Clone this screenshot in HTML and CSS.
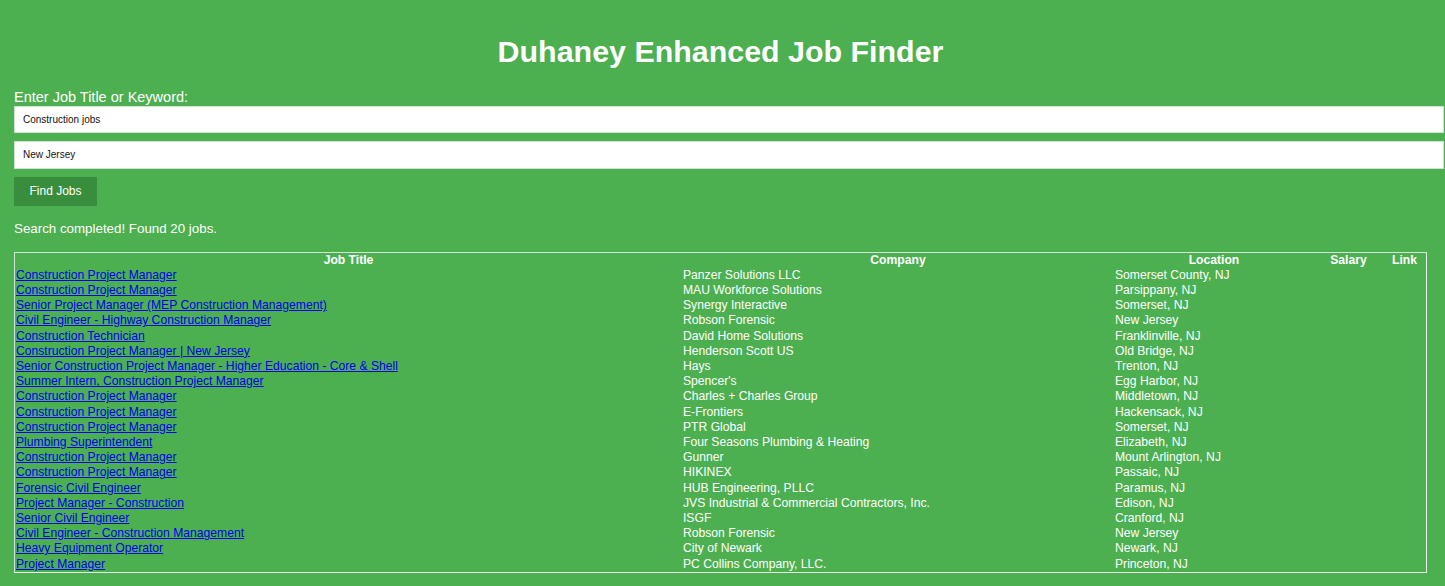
FILE: index.html
```html
<!DOCTYPE html>
<html lang="en">
<head>
<meta charset="utf-8">
<title>Duhaney Enhanced Job Finder</title>
<link rel="stylesheet" href="styles.css">
</head>
<body>
<main class="page">
  <h1 class="title">Duhaney Enhanced Job Finder</h1>
  <form class="search">
    <label class="label" for="kw">Enter Job Title or Keyword:</label>
    <input class="field" id="kw" type="text" value="Construction jobs">
    <input class="field" id="loc" type="text" value="New Jersey">
    <button class="btn" type="button">Find Jobs</button>
  </form>
  <p class="status">Search completed! Found 20 jobs.</p>
  <table class="jobs">
    <colgroup>
      <col class="c-title"><col class="c-company"><col class="c-location"><col class="c-salary"><col class="c-link">
    </colgroup>
    <thead>
      <tr><th>Job Title</th><th>Company</th><th>Location</th><th>Salary</th><th>Link</th></tr>
    </thead>
    <tbody>
      <tr><td><a href="#">Construction Project Manager</a></td><td>Panzer Solutions LLC</td><td>Somerset County, NJ</td><td></td><td></td></tr>
      <tr><td><a href="#">Construction Project Manager</a></td><td>MAU Workforce Solutions</td><td>Parsippany, NJ</td><td></td><td></td></tr>
      <tr><td><a href="#">Senior Project Manager (MEP Construction Management)</a></td><td>Synergy Interactive</td><td>Somerset, NJ</td><td></td><td></td></tr>
      <tr><td><a href="#">Civil Engineer - Highway Construction Manager</a></td><td>Robson Forensic</td><td>New Jersey</td><td></td><td></td></tr>
      <tr><td><a href="#">Construction Technician</a></td><td>David Home Solutions</td><td>Franklinville, NJ</td><td></td><td></td></tr>
      <tr><td><a href="#">Construction Project Manager | New Jersey</a></td><td>Henderson Scott US</td><td>Old Bridge, NJ</td><td></td><td></td></tr>
      <tr><td><a href="#">Senior Construction Project Manager - Higher Education - Core &amp; Shell</a></td><td>Hays</td><td>Trenton, NJ</td><td></td><td></td></tr>
      <tr><td><a href="#">Summer Intern, Construction Project Manager</a></td><td>Spencer's</td><td>Egg Harbor, NJ</td><td></td><td></td></tr>
      <tr><td><a href="#">Construction Project Manager</a></td><td>Charles + Charles Group</td><td>Middletown, NJ</td><td></td><td></td></tr>
      <tr><td><a href="#">Construction Project Manager</a></td><td>E-Frontiers</td><td>Hackensack, NJ</td><td></td><td></td></tr>
      <tr><td><a href="#">Construction Project Manager</a></td><td>PTR Global</td><td>Somerset, NJ</td><td></td><td></td></tr>
      <tr><td><a href="#">Plumbing Superintendent</a></td><td>Four Seasons Plumbing &amp; Heating</td><td>Elizabeth, NJ</td><td></td><td></td></tr>
      <tr><td><a href="#">Construction Project Manager</a></td><td>Gunner</td><td>Mount Arlington, NJ</td><td></td><td></td></tr>
      <tr><td><a href="#">Construction Project Manager</a></td><td>HIKINEX</td><td>Passaic, NJ</td><td></td><td></td></tr>
      <tr><td><a href="#">Forensic Civil Engineer</a></td><td>HUB Engineering, PLLC</td><td>Paramus, NJ</td><td></td><td></td></tr>
      <tr><td><a href="#">Project Manager - Construction</a></td><td>JVS Industrial &amp; Commercial Contractors, Inc.</td><td>Edison, NJ</td><td></td><td></td></tr>
      <tr><td><a href="#">Senior Civil Engineer</a></td><td>ISGF</td><td>Cranford, NJ</td><td></td><td></td></tr>
      <tr><td><a href="#">Civil Engineer - Construction Management</a></td><td>Robson Forensic</td><td>New Jersey</td><td></td><td></td></tr>
      <tr><td><a href="#">Heavy Equipment Operator</a></td><td>City of Newark</td><td>Newark, NJ</td><td></td><td></td></tr>
      <tr><td><a href="#">Project Manager</a></td><td>PC Collins Company, LLC.</td><td>Princeton, NJ</td><td></td><td></td></tr>
    </tbody>
  </table>
</main>
</body>
</html>
```

FILE: styles.css
```css
html, body {
  margin: 0;
  padding: 0;
  background: #4caf50;
  overflow: hidden;
}

body {
  font-family: "Liberation Sans", Arial, sans-serif;
  color: #ffffff;
}

.page {
  padding: 0 18px 20px 14px;
}

.title {
  margin: 33.5px 0 0;
  font-size: 30.4px;
  line-height: 34.5px;
  font-weight: bold;
  text-align: center;
}

.search {
  margin: 20.5px 0 0;
  display: flex;
  flex-direction: column;
  align-items: flex-start;
}

.label {
  display: block;
  font-size: 14.5px;
  line-height: 17px;
}

.field {
  box-sizing: border-box;
  width: calc(100% + 17px);
  height: 27px;
  margin: 0 0 8px;
  padding: 0 8px;
  border: 1px solid #cde5ce;
  background: #ffffff;
  color: #111111;
  font-family: "Liberation Sans", Arial, sans-serif;
  font-size: 10px;
  outline: none;
}

.field + .field {
  height: 28px;
  margin-bottom: 8px;
}

.btn {
  width: 83px;
  height: 29px;
  margin-top: 0;
  padding: 0;
  border: none;
  background: #388e3c;
  color: #ffffff;
  font-family: "Liberation Sans", Arial, sans-serif;
  font-size: 12px;
  cursor: pointer;
}

.status {
  margin: 15px 0 0;
  font-size: 13.33px;
  line-height: 15.3px;
}

.jobs {
  margin-top: 15.8px;
  width: 100%;
  table-layout: fixed;
  border-collapse: separate;
  border-spacing: 0;
  border: 1px solid #cfe8d0;
  border-right-color: #e6f3e6;
  border-bottom-color: #e6f3e6;
  font-size: 12.15px;
}

.c-title { width: 667px; }
.c-company { width: 432px; }
.c-location { width: 200px; }
.c-salary { width: 69px; }
.c-link { width: 43px; }

.jobs th,
.jobs td {
  padding: 0 1px;
  line-height: 15.2px;
  height: 15.2px;
  white-space: nowrap;
  overflow: hidden;
}

.jobs th {
  font-weight: bold;
  text-align: center;
}

.jobs td {
  text-align: left;
}

.jobs a {
  color: #0000ee;
  text-decoration: underline;
}
```
